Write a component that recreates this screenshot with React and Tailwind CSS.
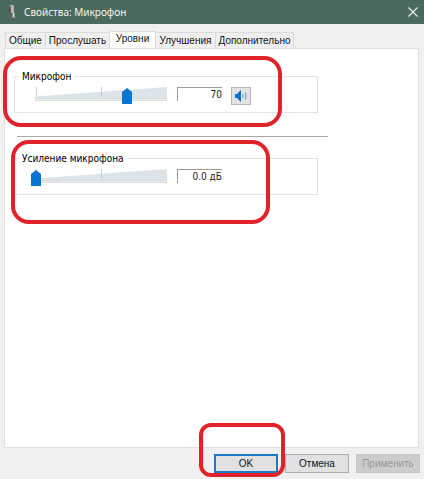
import { useState } from "react";

const TABS = [
  { id: "general", label: "Общие", width: "w-[41px]" },
  { id: "listen", label: "Прослушать", width: "w-16" },
  { id: "levels", label: "Уровни", width: "w-[46px]" },
  { id: "enhance", label: "Улучшения", width: "w-[60px]" },
  { id: "advanced", label: "Дополнительно", width: "w-[78px]" },
];

function MicIcon() {
  return (
    <svg width="10" height="14" viewBox="0 0 10 14" aria-hidden="true">
      <path d="M3 0h3l1 1v7H4L3 7z" fill="#b9b5b2" />
      <path d="M3 1h1v6H3z" fill="#6f6664" />
      <path d="M2.500 3v5l2 1.500L7.500 8" fill="none" stroke="#51403f" />
      <path d="M6.500 8v4" stroke="#d8d4d2" strokeWidth="2" />
      <path d="M5 12h4v1H5z" fill="#8f8886" />
    </svg>
  );
}

function SpeakerIcon() {
  return (
    <svg width="14" height="12" viewBox="0 0 14 12" className="shrink-0" aria-hidden="true">
      <path d="M1 4h2l4-4v12L3 8H1z" fill="#0b6fcb" />
      <path d="M8.500 4q1.500 2 0 4M11 2.500q2.500 3.500 0 7" fill="none" stroke="#4a9adb" />
    </svg>
  );
}

// red marker frame drawn over the dialog
function Marker({ className }) {
  return <div aria-hidden="true" className={`pointer-events-none absolute border-[#e0222a] ${className}`} />;
}

function LevelSlider({ id, label, value, onChange }) {
  return (
    <div className="relative h-[18px] w-[140px]">
      <svg className="absolute inset-0" width="140" height="18" viewBox="0 0 140 18" aria-hidden="true">
        <path d="M4 9.500L136 0v11H4z" fill="#dce4e9" />
        <path d="M5.500 0v9M70.500 0v10" stroke="#cbd0d3" />
        <rect x="4.500" y="11.500" width="131" height="2" fill="#eceeee" stroke="#dcdcdc" />
      </svg>
      <input
        id={id}
        type="range"
        min="0"
        max="100"
        aria-label={label}
        value={value}
        onChange={(e) => onChange(Number(e.target.value))}
        className="absolute inset-0 m-0 h-[18px] w-full appearance-none bg-transparent [&::-webkit-slider-thumb]:h-4 [&::-webkit-slider-thumb]:w-[10px] [&::-webkit-slider-thumb]:appearance-none [&::-webkit-slider-thumb]:bg-[#0a74d1] [&::-webkit-slider-thumb]:[clip-path:polygon(50%_0,100%_25%,100%_100%,0_100%,0_25%)]"
      />
    </div>
  );
}

function LevelGroup({ title, name, value, onChange, text, children }) {
  return (
    <fieldset className="ml-[9px] h-11 w-[304px] border border-[#e2e2e2] pl-4">
      <legend className="-ml-3 px-[3px] pt-[2px] leading-[12px] text-black">{title}</legend>
      <div className="flex items-start pt-1">
        <LevelSlider id={name} label={title} value={value} onChange={onChange} />
        <input
          type="text"
          readOnly
          aria-label={`${title}: значение`}
          value={text}
          className="ml-[6px] h-[14px] w-[45px] border-t border-l border-[#9a9a9a] bg-white text-right text-[#222] outline-none"
        />
        {children}
      </div>
    </fieldset>
  );
}

export default function App() {
  const [tab, setTab] = useState("levels");
  const [level, setLevel] = useState(70);
  const [boost, setBoost] = useState(0);

  return (
    <div className="flex min-h-screen flex-col overflow-hidden bg-[#f0f0f0] font-['DejaVu_Sans_Condensed','DejaVu_Sans',sans-serif] text-[10px] leading-[14px] text-[#111]">
      <header className="flex h-6 items-center bg-[#4a695f] pr-[5px] pl-[7px] text-white">
        <MicIcon />
        <h1 className="ml-[7px] flex-1 font-['Noto_Sans',sans-serif] leading-4 text-[#f2f6f4]">Свойства: Микрофон</h1>
        <button type="button" aria-label="Закрыть" className="p-px">
          <svg width="10" height="10" viewBox="0 0 10 10" aria-hidden="true">
            <path d="M0.500 0.500l9 9M9.500 0.500l-9 9" stroke="#e9efec" strokeWidth="1.200" />
          </svg>
        </button>
      </header>

      <div role="tablist" className="mt-[7px] flex h-[17px] items-end pl-[5px] font-['Liberation_Sans',sans-serif]">
        {TABS.map((t, i) => (
          <button
            key={t.id}
            type="button"
            role="tab"
            aria-selected={tab === t.id}
            onClick={() => setTab(t.id)}
            className={`flex shrink-0 items-center justify-center border-t border-r border-[#dcdcdc] whitespace-nowrap ${t.width} ${i === 0 ? "border-l" : ""} ${
              tab === t.id ? "h-[17px] bg-white pb-[2px]" : "h-4 bg-[#f0f0f0]"
            }`}
          >
            {t.label}
          </button>
        ))}
      </div>

      <main className="mr-[5px] ml-1 flex-1 border border-[#e0e0e0] bg-white">
        <section className="relative pt-5">
          <LevelGroup title="Микрофон" name="mic" value={level} onChange={setLevel} text={String(level)}>
            <button
              type="button"
              aria-label="Выключить звук"
              className="ml-[9px] flex h-[18px] w-5 items-center justify-center border border-[#b4b4b4] bg-[#e3e3e3]"
            >
              <SpeakerIcon />
            </button>
          </LevelGroup>
          <Marker className="top-[7px] -left-[2px] h-[71px] w-[279px] rounded-[18px] border-4" />
        </section>

        <hr className="mt-[23px] ml-3 w-[311px] border-[#a8a8a8]" />

        <section className="relative pt-[14px]">
          <LevelGroup title="Усиление микрофона" name="boost" value={boost} onChange={setBoost} text={`${boost.toFixed(1)} дБ`} />
          <Marker className="top-[3px] left-[6px] h-[84px] w-[259px] rounded-[18px] border-4" />
        </section>
      </main>

      <footer className="mt-[6px] mb-[6px] flex justify-end gap-[7px] pr-1 font-['Liberation_Sans',sans-serif]">
        <div className="relative">
          <button type="button" className="h-[19px] w-16 border-2 border-[#1a78c8] bg-[#e1e1e1] leading-[14px]">
            OK
          </button>
          <Marker className="-top-[31px] -left-[15px] h-[54px] w-[86px] rounded-xl border-4" />
        </div>
        <button type="button" className="h-[19px] w-16 border border-[#adadad] bg-[#e1e1e1] leading-[14px]">
          Отмена
        </button>
        <button type="button" disabled className="h-[19px] w-16 border border-[#c4c4c4] bg-[#cccccc] leading-[14px] text-[#9a9a9a]">
          Применить
        </button>
      </footer>
    </div>
  );
}
